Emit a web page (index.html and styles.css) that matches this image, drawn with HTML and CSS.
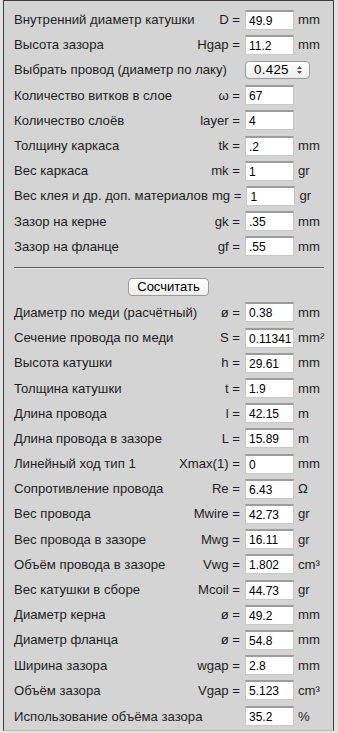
FILE: index.html
```html
<!DOCTYPE html>
<html lang="ru">
<head>
<meta charset="UTF-8">
<meta name="viewport" content="width=device-width, initial-scale=1.0">
<title>Расчёт катушки</title>
<link rel="stylesheet" href="styles.css">
</head>
<body>
  <div class="panel">
    <div class="row"><span class="label">Внутренний диаметр катушки</span><span class="sym">D =</span><input class="val" value="49.9"><span class="unit">mm</span></div>
    <div class="row"><span class="label">Высота зазора</span><span class="sym">Hgap =</span><input class="val" value="11.2"><span class="unit">mm</span></div>
    <div class="row"><span class="label">Выбрать провод (диаметр по лаку)</span>
      <div class="select-wrap">
        <select class="wire">
          <option>0.425</option>
        </select>
        <svg class="arrows" width="7" height="10" viewBox="0 0 7 10"><path d="M3.5 1 L6 4 H1 Z M3.5 9 L6 6 H1 Z" fill="#555"/></svg>
      </div>
    </div>
    <div class="row"><span class="label">Количество витков в слое</span><span class="sym">ω =</span><input class="val" value="67"><span class="unit"></span></div>
    <div class="row"><span class="label">Количество слоёв</span><span class="sym">layer =</span><input class="val" value="4"><span class="unit"></span></div>
    <div class="row"><span class="label">Толщину каркаса</span><span class="sym">tk =</span><input class="val" value=".2"><span class="unit">mm</span></div>
    <div class="row"><span class="label">Вес каркаса</span><span class="sym">mk =</span><input class="val" value="1"><span class="unit">gr</span></div>
    <div class="row"><span class="label">Вес клея и др. доп. материалов</span><span class="sym">mg =</span><input class="val" value="1"><span class="unit">gr</span></div>
    <div class="row"><span class="label">Зазор на керне</span><span class="sym">gk =</span><input class="val" value=".35"><span class="unit">mm</span></div>
    <div class="row"><span class="label">Зазор на фланце</span><span class="sym">gf =</span><input class="val" value=".55"><span class="unit">mm</span></div>

    <hr class="sep">

    <div class="btn-row"><button class="calc">Сосчитать</button></div>

    <div class="row"><span class="label">Диаметр по меди (расчётный)</span><span class="sym">ø =</span><input class="val" value="0.38"><span class="unit">mm</span></div>
    <div class="row"><span class="label">Сечение провода по меди</span><span class="sym">S =</span><input class="val" value="0.11341"><span class="unit">mm²</span></div>
    <div class="row"><span class="label">Высота катушки</span><span class="sym">h =</span><input class="val" value="29.61"><span class="unit">mm</span></div>
    <div class="row"><span class="label">Толщина катушки</span><span class="sym">t =</span><input class="val" value="1.9"><span class="unit">mm</span></div>
    <div class="row"><span class="label">Длина провода</span><span class="sym">l =</span><input class="val" value="42.15"><span class="unit">m</span></div>
    <div class="row"><span class="label">Длина провода в зазоре</span><span class="sym">L =</span><input class="val" value="15.89"><span class="unit">m</span></div>
    <div class="row"><span class="label">Линейный ход тип 1</span><span class="sym">Xmax(1) =</span><input class="val" value="0"><span class="unit">mm</span></div>
    <div class="row"><span class="label">Сопротивление провода</span><span class="sym">Re =</span><input class="val" value="6.43"><span class="unit">Ω</span></div>
    <div class="row"><span class="label">Вес провода</span><span class="sym">Mwire =</span><input class="val" value="42.73"><span class="unit">gr</span></div>
    <div class="row"><span class="label">Вес провода в зазоре</span><span class="sym">Mwg =</span><input class="val" value="16.11"><span class="unit">gr</span></div>
    <div class="row"><span class="label">Объём провода в зазоре</span><span class="sym">Vwg =</span><input class="val" value="1.802"><span class="unit">cm³</span></div>
    <div class="row"><span class="label">Вес катушки в сборе</span><span class="sym">Mcoil =</span><input class="val" value="44.73"><span class="unit">gr</span></div>
    <div class="row"><span class="label">Диаметр керна</span><span class="sym">ø =</span><input class="val" value="49.2"><span class="unit">mm</span></div>
    <div class="row"><span class="label">Диаметр фланца</span><span class="sym">ø =</span><input class="val" value="54.8"><span class="unit">mm</span></div>
    <div class="row"><span class="label">Ширина зазора</span><span class="sym">wgap =</span><input class="val" value="2.8"><span class="unit">mm</span></div>
    <div class="row"><span class="label">Объём зазора</span><span class="sym">Vgap =</span><input class="val" value="5.123"><span class="unit">cm³</span></div>
    <div class="row last"><span class="label">Использование объёма зазора</span><input class="val" value="35.2"><span class="unit">%</span></div>
  </div>
</body>
</html>
```

FILE: styles.css
```css
body {
  margin: 0;
  background-color: #e2e2e2;
  font-family: "Liberation Sans", Arial, sans-serif;
  font-size: 13.15px;
  color: #1e1e1e;
}

.panel {
  margin: 0 4px 0 3px;
  height: 731px;
  box-sizing: border-box;
  background-color: #d4d4d4;
  border: 1px solid #3c3c3c;
  border-bottom-color: #b8b8b8;
  padding: 6px 0 0 10px; /* text starts at x=14 */
}

.row {
  display: flex;
  align-items: center;
  height: 25.2px;
}

.label {
  flex: 1;
  white-space: nowrap;
  margin-right: 4px;
}

.sym {
  margin-right: 5px;
  white-space: nowrap;
}

.val {
  width: 49px;
  height: 20px;
  box-sizing: border-box;
  margin: 0;
  padding: 1px 0 0 3px;
  border: 1px solid #c8c8c8;
  border-top: 2px solid #9c9c9c;
  background: #fff;
  font-family: "Liberation Sans", Arial, sans-serif;
  font-size: 12px;
  color: #000;
}

.unit {
  width: 39px;
  padding-left: 4px;
  box-sizing: border-box;
  white-space: nowrap;
}

.select-wrap {
  position: relative;
  width: 65px;
  height: 18px;
  margin-right: 23px;
}

.wire {
  width: 65px;
  height: 18px;
  -webkit-appearance: none;
  appearance: none;
  border: 1px solid #9a9a9a;
  border-radius: 4px;
  background: linear-gradient(#ffffff, #ececec);
  font-family: "Liberation Sans", Arial, sans-serif;
  font-size: 13.3px;
  color: #000;
  padding: 0 0 0 8px;
  letter-spacing: 0.3px;
}

.arrows {
  position: absolute;
  right: 7px;
  top: 4px;
}

.sep {
  margin: 8px 9px 0 0;
  border: none;
  border-top: 1px solid #5a5a5a;
  border-bottom: 1px solid #e8e8e8;
  height: 0;
}

.btn-row {
  display: flex;
  justify-content: center;
  padding: 9px 10px 4px 0;
}

.calc {
  width: 81px;
  height: 18px;
  padding: 0;
  border: 1px solid #9a9a9a;
  border-radius: 4px;
  background: linear-gradient(#ffffff, #ededed);
  font-family: "Liberation Sans", Arial, sans-serif;
  font-size: 13px;
  color: #000;
}

.row.last {
  margin-top: 1px;
}
```
